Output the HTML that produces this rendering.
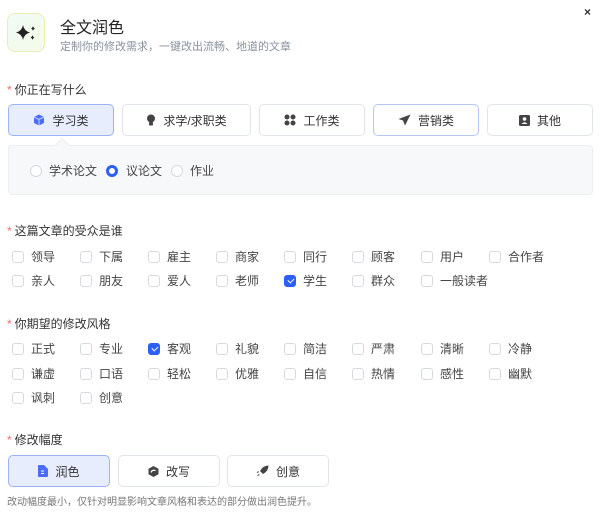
<!DOCTYPE html>
<html><head><meta charset="utf-8"><style>
*{box-sizing:border-box;margin:0;padding:0}
body{width:600px;height:524px;background:#fff;font-family:"Liberation Sans","Noto Sans CJK SC",sans-serif;color:#333;position:relative;overflow:hidden}
.a{position:absolute;white-space:nowrap}
.lbl{font-size:12px;color:#333}
.lbl b{color:#f56c6c;font-weight:normal;margin-right:3px}
.btn{position:absolute;height:32px;border:1px solid #e1e4ea;border-radius:5px;background:#fff;font-size:12px;color:#333;display:flex;align-items:center;justify-content:center;gap:7px}
.btn.on{background:#e8edfd;border-color:#9cb2f7}
.cb{position:absolute;font-size:12px;color:#444;display:flex;align-items:center}
.cb i{width:12px;height:12px;border:1px solid #d6d9e0;border-radius:3px;margin-right:7px;background:#fff;display:inline-block;position:relative}
.cb i.k{background:#2c5ff6;border-color:#2c5ff6}
.cb i.k:after{content:"";position:absolute;left:3.5px;top:1.5px;width:3px;height:5px;border:solid #fff;border-width:0 1.5px 1.5px 0;transform:rotate(45deg)}
.rd{position:absolute;width:12px;height:12px;border:1px solid #d6d9e0;border-radius:50%;background:#fff}
.rd.k{border:3.5px solid #2c5ff6}
</style></head><body>
<div class="a" style="left:7px;top:13px;width:38px;height:39px;border:1px solid #e6f0b5;border-radius:8px;background:linear-gradient(135deg,#f1fbf6,#f5fbe8)">
<svg width="38" height="39" viewBox="0 0 38 39" style="position:absolute;left:-1px;top:-1px"><path d="M16 12 Q17 18 23 19.5 Q17 21 16 27 Q15 21 9 19.5 Q15 18 16 12Z" fill="#222"/><path d="M26 13 Q26.5 15 28 15.5 Q26.5 16 26 18 Q25.5 16 24 15.5 Q25.5 15 26 13Z" fill="#222"/><path d="M25.5 22 Q26 24 27.5 24.5 Q26 25 25.5 27 Q25 25 23.5 24.5 Q25 24 25.5 22Z" fill="#222"/></svg></div>
<div class="a" style="left:60px;top:14px;font-size:16px;color:#222">全文润色</div>
<div class="a" style="left:60px;top:38px;font-size:11px;color:#8a919f">定制你的修改需求，一键改出流畅、地道的文章</div>
<div class="a" style="left:584px;top:5px;font-size:12px;font-weight:bold;color:#333">×</div>

<div class="a lbl" style="left:7px;top:81px"><b>*</b>你正在写什么</div>
<div class="btn on" style="left:8px;top:104px;width:106px"><svg width="12" height="12" viewBox="0 0 12 12"><path d="M6 0.5L11 3V9L6 11.5L1 9V3Z" fill="#4a6cf7"/><path d="M1 3L6 5.5L11 3M6 5.5V11.5" stroke="#c5d2fc" fill="none"/></svg>学习类</div>
<div class="btn" style="left:122px;top:104px;width:129px"><svg width="10" height="12" viewBox="0 0 10 12"><circle cx="5" cy="4.5" r="4" fill="#444"/><rect x="3" y="8" width="4" height="3.5" rx="1" fill="#444"/></svg>求学/求职类</div>
<div class="btn" style="left:259px;top:104px;width:106px"><svg width="12" height="12" viewBox="0 0 12 12" fill="#444"><circle cx="3" cy="3" r="2.5"/><circle cx="9" cy="3" r="2.5"/><circle cx="3" cy="9" r="2.5"/><circle cx="9" cy="9" r="2.5"/></svg>工作类</div>
<div class="btn" style="left:373px;top:104px;width:106px;border-color:#b7c6f7"><svg width="13" height="12" viewBox="0 0 13 12"><path d="M12.5 0.5L0.5 5L5 6.5L7 11.5Z" fill="#444"/></svg>营销类</div>
<div class="btn" style="left:487px;top:104px;width:106px"><svg width="11" height="11" viewBox="0 0 11 11"><rect width="11" height="11" rx="1.5" fill="#444"/><circle cx="5.5" cy="4" r="1.8" fill="#fff"/><path d="M2.5 9Q5.5 5.5 8.5 9Z" fill="#fff"/></svg>其他</div>

<div class="a" style="left:8px;top:145px;width:585px;height:50px;background:#f7f8fa;border:1px solid #eceef2;border-radius:4px"></div>
<div class="a" style="left:57px;top:140px;width:10px;height:10px;background:#f7f8fa;border-left:1px solid #eceef2;border-top:1px solid #eceef2;transform:rotate(45deg)"></div>
<span class="rd" style="left:30px;top:165px"></span><div class="a" style="left:49px;top:162px;font-size:12px;color:#444">学术论文</div>
<span class="rd k" style="left:106px;top:165px"></span><div class="a" style="left:126px;top:162px;font-size:12px;color:#444">议论文</div>
<span class="rd" style="left:171px;top:165px"></span><div class="a" style="left:190px;top:162px;font-size:12px;color:#444">作业</div>

<div class="a lbl" style="left:7px;top:222px"><b>*</b>这篇文章的受众是谁</div>
<div class="cb" style="left:12px;top:248px"><i></i>领导</div>
<div class="cb" style="left:80px;top:248px"><i></i>下属</div>
<div class="cb" style="left:148px;top:248px"><i></i>雇主</div>
<div class="cb" style="left:216px;top:248px"><i></i>商家</div>
<div class="cb" style="left:284px;top:248px"><i></i>同行</div>
<div class="cb" style="left:352px;top:248px"><i></i>顾客</div>
<div class="cb" style="left:421px;top:248px"><i></i>用户</div>
<div class="cb" style="left:489px;top:248px"><i></i>合作者</div>
<div class="cb" style="left:12px;top:272px"><i></i>亲人</div>
<div class="cb" style="left:80px;top:272px"><i></i>朋友</div>
<div class="cb" style="left:148px;top:272px"><i></i>爱人</div>
<div class="cb" style="left:216px;top:272px"><i></i>老师</div>
<div class="cb" style="left:284px;top:272px"><i class="k"></i>学生</div>
<div class="cb" style="left:352px;top:272px"><i></i>群众</div>
<div class="cb" style="left:421px;top:272px"><i></i>一般读者</div>

<div class="a lbl" style="left:7px;top:315px"><b>*</b>你期望的修改风格</div>
<div class="cb" style="left:12px;top:340px"><i></i>正式</div>
<div class="cb" style="left:80px;top:340px"><i></i>专业</div>
<div class="cb" style="left:148px;top:340px"><i class="k"></i>客观</div>
<div class="cb" style="left:216px;top:340px"><i></i>礼貌</div>
<div class="cb" style="left:284px;top:340px"><i></i>简洁</div>
<div class="cb" style="left:352px;top:340px"><i></i>严肃</div>
<div class="cb" style="left:421px;top:340px"><i></i>清晰</div>
<div class="cb" style="left:489px;top:340px"><i></i>冷静</div>
<div class="cb" style="left:12px;top:365px"><i></i>谦虚</div>
<div class="cb" style="left:80px;top:365px"><i></i>口语</div>
<div class="cb" style="left:148px;top:365px"><i></i>轻松</div>
<div class="cb" style="left:216px;top:365px"><i></i>优雅</div>
<div class="cb" style="left:284px;top:365px"><i></i>自信</div>
<div class="cb" style="left:352px;top:365px"><i></i>热情</div>
<div class="cb" style="left:421px;top:365px"><i></i>感性</div>
<div class="cb" style="left:489px;top:365px"><i></i>幽默</div>
<div class="cb" style="left:12px;top:389px"><i></i>讽刺</div>
<div class="cb" style="left:80px;top:389px"><i></i>创意</div>

<div class="a lbl" style="left:7px;top:431px"><b>*</b>修改幅度</div>
<div class="btn on" style="left:8px;top:455px;width:102px"><svg width="10" height="12" viewBox="0 0 10 12"><path d="M1 0H6L10 4V11Q10 12 9 12H1Q0 12 0 11V1Q0 0 1 0Z" fill="#4a6cf7"/><path d="M3 6H6M3 8.5H6" stroke="#fff"/></svg>润色</div>
<div class="btn" style="left:118px;top:455px;width:102px"><svg width="11" height="11" viewBox="0 0 11 11"><path d="M5.5 0L10.5 2.8V8.2L5.5 11L0.5 8.2V2.8Z" fill="#444"/><path d="M3 6.5Q4 3.5 7.5 4.5" stroke="#fff" fill="none" stroke-width="1.2"/></svg>改写</div>
<div class="btn" style="left:227px;top:455px;width:102px"><svg width="13" height="12" viewBox="0 0 13 12"><path d="M12.5 0.5Q7 0.5 4 6L7 9Q12.5 6 12.5 0.5Z" fill="#444"/><path d="M3 6L0.5 7L2 8.5ZM2.5 9L0.5 11.5L4 10Z" fill="#666"/></svg>创意</div>
<div class="a" style="left:7px;top:493px;font-size:10px;color:#777">改动幅度最小，仅针对明显影响文章风格和表达的部分做出润色提升。</div>
</body></html>
